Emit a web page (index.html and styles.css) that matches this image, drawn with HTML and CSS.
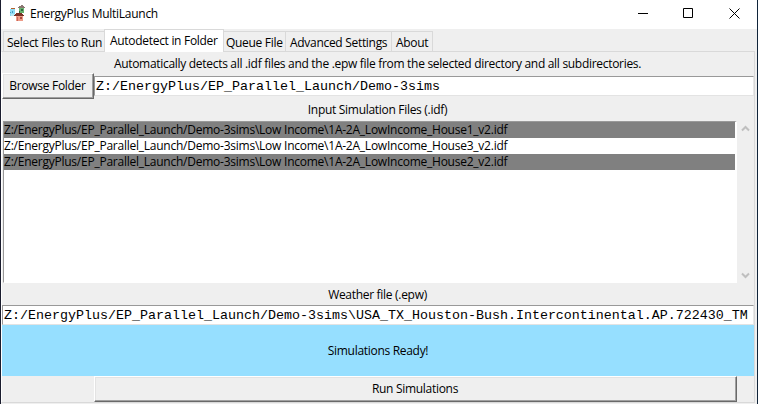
FILE: index.html
```html
<!DOCTYPE html>
<html lang="en">
<head>
<meta charset="utf-8">
<title>EnergyPlus MultiLaunch</title>
<link rel="stylesheet" href="styles.css">
</head>
<body>
<div class="window">
  <header class="titlebar">
    <svg class="app-icon" width="16" height="16" viewBox="0 0 16 16" shape-rendering="crispEdges">
      <path fill="#b5602c" d="M2 3h4v1H2z"/>
      <path fill="#8edcf5" d="M1 4h5v7H1z"/>
      <path fill="#b8e8f5" d="M2 9h4v2H2z"/>
      <path fill="#4a9cc0" d="M1 7h1v1H1zM3 6h1v2H3z"/>
      <path fill="#8b7772" d="M9 2h7v1H9zM10 1h5v1h-5zM12 0h2v1h-2z"/>
      <path fill="#67b36f" d="M10 3h5v5h-5z"/>
      <path fill="#2f6844" d="M12 4h2v2h-2zM10 6h1v2h-1z"/>
      <path fill="#793126" d="M5 10h10v1H5zM6 9h8v1H6zM7 8h6v1H7z"/>
      <path fill="#ed9b87" d="M7 11h7v5H7z"/>
      <path fill="#a94b40" d="M11 12h2v2h-2z"/>
      <path fill="#c9685b" d="M8 12h1v4H8z"/>
    </svg>
    <h1 class="title">EnergyPlus MultiLaunch</h1>
    <svg class="controls" width="116" height="29" viewBox="0 0 116 29" fill="none" stroke="#000">
      <path d="M0 13.500h10"/>
      <path d="M45.500 8.500h9v9h-9z"/>
      <path d="M91.500 8.500l10 10M101.500 8.500l-10 10"/>
    </svg>
  </header>
  <nav class="tabs">
    <span class="tab tab-select">Select Files to Run</span>
    <span class="tab tab-auto active">Autodetect in Folder</span>
    <span class="tab tab-queue">Queue File</span>
    <span class="tab tab-advanced">Advanced Settings</span>
    <span class="tab tab-about">About</span>
  </nav>
  <main class="panel">
    <p class="label description">Automatically detects all .idf files and the .epw file from the selected directory and all subdirectories.</p>
    <div class="folder-row">
      <button class="button browse">Browse Folder</button>
      <div class="entry">Z:/EnergyPlus/EP_Parallel_Launch/Demo-3sims</div>
    </div>
    <p class="label input-label">Input Simulation Files (.idf)</p>
    <div class="list-row">
      <ul class="listbox">
        <li class="selected">Z:/EnergyPlus/EP_Parallel_Launch/Demo-3sims\Low Income\1A-2A_LowIncome_House1_v2.idf</li>
        <li>Z:/EnergyPlus/EP_Parallel_Launch/Demo-3sims\Low Income\1A-2A_LowIncome_House3_v2.idf</li>
        <li class="selected">Z:/EnergyPlus/EP_Parallel_Launch/Demo-3sims\Low Income\1A-2A_LowIncome_House2_v2.idf</li>
      </ul>
      <div class="scrollbar">
        <svg width="9" height="7" viewBox="0 0 9 7"><path d="M1 5.500l3.500-3.500L8 5.500" fill="none" stroke="#bfbfbf" stroke-width="2"/></svg>
        <svg width="9" height="7" viewBox="0 0 9 7"><path d="M1 1.500l3.500 3.500L8 1.500" fill="none" stroke="#bfbfbf" stroke-width="2"/></svg>
      </div>
    </div>
    <p class="label weather-label">Weather file (.epw)</p>
    <div class="entry">Z:/EnergyPlus/EP_Parallel_Launch/Demo-3sims\USA_TX_Houston-Bush.Intercontinental.AP.722430_TM</div>
    <div class="status">Simulations Ready!</div>
    <button class="button run">Run Simulations</button>
  </main>
</div>
</body>
</html>
```
FILE: styles.css
```css
* { box-sizing: border-box; }

body {
  margin: 0;
  background: #efefef;
  color: #000;
  font: 12px/16px "Open Sans", "Noto Sans", sans-serif;
  letter-spacing: -0.3px;
  white-space: nowrap;
  overflow: hidden;
}

.window {
  display: flex;
  flex-direction: column;
  width: 758px;
  height: 404px;
  background: #efefef;
  border-left: 1px solid #1a1d2e;
  border-right: 1px solid #10243a;
}

.titlebar {
  display: flex;
  align-items: flex-start;
  height: 29px;
  background: #fff;
}

.app-icon { margin: 5px 0 0 8px; }

.title {
  margin: 6px 0 0 5px;
  font-size: 12px;
  font-weight: 400;
  line-height: 16px;
  letter-spacing: -0.27px;
}

.controls { margin-left: auto; margin-right: 3px; }

.tabs {
  display: flex;
  align-items: flex-end;
  height: 22px;
  padding-left: 2px;
}

.tab {
  height: 20px;
  padding: 3px 0 0 3px;
  border: 1px solid #d9d9d9;
  border-bottom: 0;
  border-right: 0;
}

.tab-select { width: 101px; }
.tab-auto { width: 120px; }
.tab-queue { width: 61px; padding-left: 2px; border-left: 0; }
.tab-advanced { width: 106px; padding-left: 4px; }
.tab-about { width: 42px; padding-left: 4px; border-right: 1px solid #d9d9d9; }

.tab.active {
  position: relative;
  height: 23px;
  margin-bottom: -1px;
  padding: 3px 0 0 5px;
  background: #fff;
  border-right: 1px solid #d9d9d9;
}

.panel {
  display: flex;
  flex-direction: column;
  width: 754px;
  height: 352px;
  border: 1px solid #d9d9d9;
  border-left-color: #fff;
}

.label { margin: 0; padding-right: 1px; text-align: center; }
.description { height: 21px; padding-top: 4px; }

.folder-row {
  display: flex;
  align-items: center;
  height: 26px;
}

.entry {
  flex: 1 0 auto;
  height: 20px;
  padding: 1px 0 0 1px;
  overflow: hidden;
  background: #fff;
  border: 1px solid #999;
  border-right-color: #e8e8e8;
  border-bottom-color: #e3e3e3;
  font: 13.333px/17px "Liberation Mono", monospace;
  letter-spacing: 0;
}

.panel > .entry { flex: none; }

.button {
  padding: 0 1px 0 0;
  background: #efefef;
  border: 1px solid;
  border-color: #fff #696969 #696969 #fff;
  box-shadow: inset -1px -1px #a0a0a0, inset 1px 1px #e3e3e3;
  color: #000;
  font: inherit;
  letter-spacing: inherit;
}

.browse { width: 92px; height: 26px; }

.input-label { height: 21px; padding-top: 3px; }

.list-row {
  display: flex;
  height: 164px;
}

.listbox {
  width: 734px;
  height: 162px;
  margin: 1px 0 0 1px;
  padding: 0;
  background: #fff;
  border: 1px solid #999;
  border-right: 2px solid #fff;
  border-bottom-color: #fff;
  letter-spacing: -0.24px;
  list-style: none;
}

.selected { background: #808080; }

.scrollbar {
  display: flex;
  flex: 1;
  flex-direction: column;
  align-items: center;
  justify-content: space-between;
  padding: 5px 1px 5px 0;
}

.weather-label { height: 21px; padding-top: 3px; }

.status {
  display: flex;
  align-items: center;
  justify-content: center;
  height: 51px;
  background: #96dfff;
}

.run { width: 643px; height: 26px; margin-left: 92px; }
```
